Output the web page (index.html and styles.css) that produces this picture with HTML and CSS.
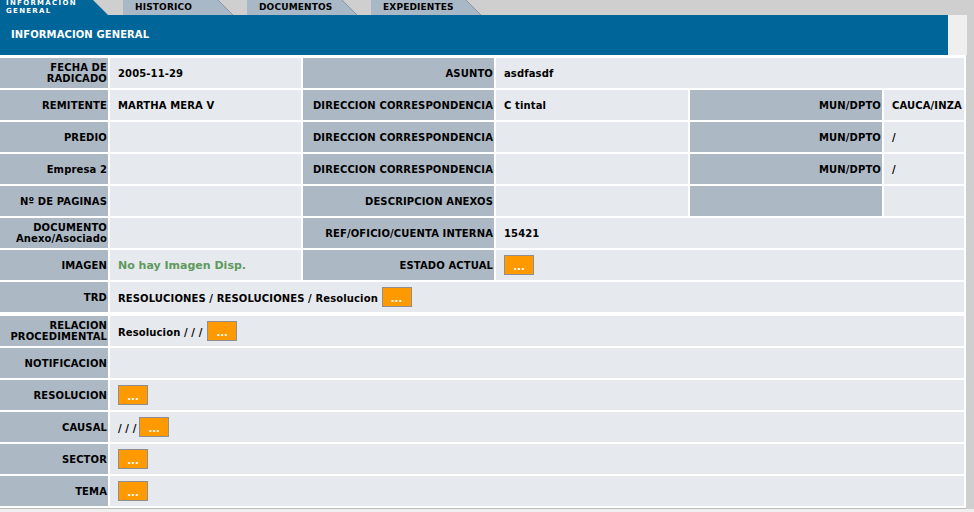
FILE: index.html
```html
<!DOCTYPE html>
<html lang="es">
<head>
<meta charset="utf-8">
<title>Informacion General</title>
<link rel="stylesheet" href="styles.css">
</head>
<body>
<div class="tabs">
  <div class="tab tab-active">
    <span class="tab-text tab-text-active">INFORMACION<br>GENERAL</span>
    <svg class="tab-edge" width="15" height="15" viewBox="0 0 15 15"><polygon points="0,0 15,15 0,15" fill="#006699"/></svg>
  </div>
  <div class="tab">
    <span class="tab-text">HISTORICO</span>
    <svg class="tab-edge" width="15" height="15" viewBox="0 0 15 15"><polygon points="0,0 15,15 0,15" fill="#a9b8c6"/><line x1="0" y1="0" x2="15" y2="15" stroke="#8797a6" stroke-width="1"/></svg>
  </div>
  <div class="tab">
    <span class="tab-text">DOCUMENTOS</span>
    <svg class="tab-edge" width="15" height="15" viewBox="0 0 15 15"><polygon points="0,0 15,15 0,15" fill="#a9b8c6"/><line x1="0" y1="0" x2="15" y2="15" stroke="#8797a6" stroke-width="1"/></svg>
  </div>
  <div class="tab">
    <span class="tab-text">EXPEDIENTES</span>
    <svg class="tab-edge" width="15" height="15" viewBox="0 0 15 15"><polygon points="0,0 15,15 0,15" fill="#a9b8c6"/><line x1="0" y1="0" x2="15" y2="15" stroke="#8797a6" stroke-width="1"/></svg>
  </div>
</div>

<div class="header">
  <div class="header-title">INFORMACION GENERAL</div>
  <div class="header-end"></div>
</div>

<div class="content">
  <div class="grid grid-main">
    <div class="lbl">FECHA DE<br>RADICADO</div>
    <div class="val">2005-11-29</div>
    <div class="lbl">ASUNTO</div>
    <div class="val span3">asdfasdf</div>

    <div class="lbl">REMITENTE</div>
    <div class="val">MARTHA MERA V</div>
    <div class="lbl">DIRECCION CORRESPONDENCIA</div>
    <div class="val">C tintal</div>
    <div class="lbl">MUN/DPTO</div>
    <div class="val">CAUCA/INZA</div>

    <div class="lbl">PREDIO</div>
    <div class="val"></div>
    <div class="lbl">DIRECCION CORRESPONDENCIA</div>
    <div class="val"></div>
    <div class="lbl">MUN/DPTO</div>
    <div class="val">/</div>

    <div class="lbl">Empresa 2</div>
    <div class="val"></div>
    <div class="lbl">DIRECCION CORRESPONDENCIA</div>
    <div class="val"></div>
    <div class="lbl">MUN/DPTO</div>
    <div class="val">/</div>

    <div class="lbl">Nº DE PAGINAS</div>
    <div class="val"></div>
    <div class="lbl">DESCRIPCION ANEXOS</div>
    <div class="val"></div>
    <div class="lbl"></div>
    <div class="val"></div>

    <div class="lbl">DOCUMENTO<br>Anexo/Asociado</div>
    <div class="val"></div>
    <div class="lbl">REF/OFICIO/CUENTA INTERNA</div>
    <div class="val span3">15421</div>

    <div class="lbl">IMAGEN</div>
    <div class="val green">No hay Imagen Disp.</div>
    <div class="lbl">ESTADO ACTUAL</div>
    <div class="val span3"><span class="line"><span class="btn">...</span></span></div>

    <div class="lbl">TRD</div>
    <div class="val span5"><span class="line">RESOLUCIONES / RESOLUCIONES / Resolucion <span class="btn">...</span></span></div>
  </div>

  <div class="grid grid-sub">
    <div class="lbl">RELACION<br>PROCEDIMENTAL</div>
    <div class="val"><span class="line">Resolucion / / / <span class="btn btn-gap">...</span></span></div>

    <div class="lbl">NOTIFICACION</div>
    <div class="val"></div>

    <div class="lbl">RESOLUCION</div>
    <div class="val"><span class="line"><span class="btn">...</span></span></div>

    <div class="lbl">CAUSAL</div>
    <div class="val"><span class="line">/ / / <span class="btn btn-tight">...</span></span></div>

    <div class="lbl">SECTOR</div>
    <div class="val"><span class="line"><span class="btn">...</span></span></div>

    <div class="lbl">TEMA</div>
    <div class="val"><span class="line"><span class="btn">...</span></span></div>
  </div>
</div>
<div class="footer"></div>
</body>
</html>
```

FILE: styles.css
```css
html, body {
  margin: 0;
  padding: 0;
}

body {
  background: #cfcfcf;
  font-family: "DejaVu Sans", Verdana, sans-serif;
  font-size: 10px;
  font-weight: bold;
  color: #000;
  width: 974px;
  height: 512px;
  overflow: hidden;
}

/* Tabs */
.tabs {
  display: flex;
  height: 15px;
  gap: 14px;
}

.tab {
  display: flex;
  height: 15px;
}

.tab-text {
  display: block;
  width: 83px;
  padding-left: 12px;
  height: 15px;
  line-height: 15px;
  font-size: 9px;
  letter-spacing: 0.15px;
  background: #a9b8c6;
  color: #000;
  white-space: nowrap;
  overflow: hidden;
}

.tab-active {
  margin-right: 1px;
}

.tab-text-active {
  width: 87px;
  padding-left: 6px;
  height: 16px;
  background: #006699;
  color: #fff;
  font-size: 7px;
  line-height: 8px;
  letter-spacing: 1.3px;
  transform: translateY(-1px);
}

.tab-edge {
  display: block;
}

/* Header bar */
.header {
  display: flex;
  height: 40px;
}

.header-title {
  width: 937px;
  padding-left: 11px;
  background: #006699;
  color: #fff;
  line-height: 40px;
  font-size: 10px;
  letter-spacing: 0.1px;
}

.header-end {
  width: 19px;
  background: #efefef;
}

/* Content */
.content {
  width: 964px;
  background: #fff;
  padding: 3px 2px 2px 0;
  border-bottom: 1px solid #bdbdbd;
}

.grid {
  display: grid;
  grid-auto-rows: 30px;
  gap: 2px;
}

.grid-main {
  grid-template-columns: 108px 191px 191px 192px 192px 80px;
}

.grid-sub {
  grid-template-columns: 108px 854px;
  margin-top: 4px;
}

.lbl, .val {
  display: flex;
  align-items: center;
  white-space: nowrap;
  line-height: 11px;
  letter-spacing: 0.12px;
}

.lbl {
  background: #acb8c4;
  justify-content: flex-end;
  text-align: right;
  padding-right: 1px;
}

.val {
  background: #e6e9ed;
  padding-left: 8px;
}

.span3 {
  grid-column: span 3;
}

.span5 {
  grid-column: span 5;
}

.green {
  color: #5e9a5e;
  font-size: 11px;
  letter-spacing: 0;
}

.line {
  display: block;
  line-height: 12px;
}

.btn {
  display: inline-block;
  box-sizing: border-box;
  width: 30px;
  height: 20px;
  padding-top: 5px;
  border: 1px solid #8f8f8f;
  background: #ff9900;
  color: #fff;
  text-align: center;
  line-height: 12px;
  letter-spacing: 0;
  vertical-align: baseline;
}

.btn-gap {
  margin-left: 1px;
}

.btn-tight {
  margin-left: -1px;
}

.footer {
  height: 5px;
  background: #efefef;
}
```
